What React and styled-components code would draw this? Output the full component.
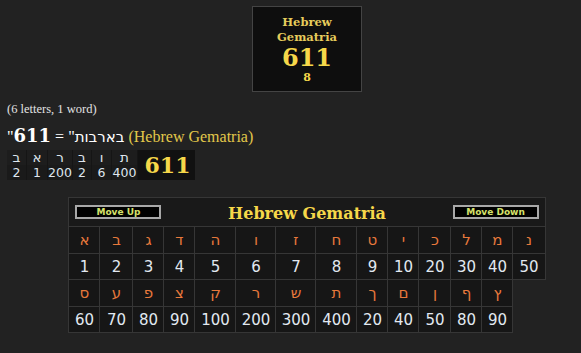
import styled, { createGlobalStyle } from 'styled-components';

const GlobalStyle = createGlobalStyle`
  html, body {
    margin: 0;
    padding: 0;
    background: #222222;
    overflow: hidden;
  }
  body {
    font-family: "Liberation Serif", serif;
    color: #dddddd;
  }
`;

const Page = styled.div`
  padding: 6px 0 0 7px;
`;

const Centered = styled.div`
  display: flex;
  flex-direction: column;
  align-items: center;
  padding-left: 26px;
`;

const ResultBox = styled.div`
  width: 110px;
  height: 86px;
  box-sizing: border-box;
  border: 1px solid #444;
  background: #0e0e0e;
  display: flex;
  flex-direction: column;
  align-items: center;
  padding-top: 8px;
  font-family: "DejaVu Serif", serif;
  font-weight: bold;
`;

const BoxTitle = styled.div`
  font-size: 11.5px;
  line-height: 15px;
  color: #e6cc5c;
  text-align: center;
`;

const BoxTotal = styled.div`
  font-size: 24px;
  line-height: 26px;
  color: #f6d84a;
`;

const BoxSmall = styled.div`
  font-size: 11px;
  line-height: 13px;
  color: #f6d84a;
`;

const Summary = styled.div`
  margin-top: 10px;
  font-size: 12.5px;
  line-height: 15px;
  color: #e2e2e2;
`;

const Equation = styled.div`
  margin-top: 9px;
  font-size: 16px;
  line-height: 20px;
  color: #ffffff;
`;

const Total = styled.b`
  font-family: "DejaVu Serif", serif;
  font-size: 18px;
`;

const Hebrew = styled.span`
  font-family: "DejaVu Sans", sans-serif;
  font-size: 15px;
`;

const Cipher = styled.span`
  font-family: "Liberation Serif", serif;
  font-size: 16px;
  color: #e2c84a;
`;

const Breakdown = styled.table`
  margin-top: 3px;
  border-collapse: separate;
  border-spacing: 0;
  background: #161616;
`;

const BCell = styled.td`
  padding: 0;
  height: 15px;
  line-height: 15px;
  text-align: center;
  font-family: "DejaVu Sans", sans-serif;
  font-size: ${({ top }) => (top ? '13.5px' : '12.5px')};
  color: #dfe6ee;
  background: ${({ top }) => (top ? '#1d1d1d' : '#1a1a1a')};
  border-right: 1px solid #151515;
`;

const BTotal = styled.td`
  width: 55px;
  padding: 0 0 0 2px;
  text-align: center;
  background: #111111;
  font-family: "DejaVu Serif", serif;
  font-weight: bold;
  font-size: 22px;
  color: #f6d84a;
  vertical-align: middle;
`;

const Chart = styled.table`
  margin-top: 17px;
  width: 477px;
  table-layout: fixed;
  border-collapse: collapse;
`;

const HeaderCell = styled.td`
  border: 1px solid #363636;
  background: #191919;
  height: 28px;
  padding: 0 6px;
`;

const HeaderBar = styled.div`
  display: flex;
  align-items: center;
  justify-content: space-between;
`;

const MoveButton = styled.button`
  width: 86px;
  height: 14px;
  padding: 0;
  background: #000;
  border: 2px solid #a8a8a8;
  color: #d6e26a;
  font-family: "DejaVu Sans", sans-serif;
  font-weight: bold;
  font-size: 9px;
  line-height: 10px;
`;

const ChartTitle = styled.div`
  font-family: "DejaVu Serif", serif;
  font-weight: bold;
  font-size: 16px;
  color: #f6d84a;
  margin-top: 3px;
`;

const Cell = styled.td`
  border: 1px solid #363636;
  background: #161616;
  text-align: center;
  padding: 0;
  height: ${({ letter }) => (letter ? '26px' : '25px')};
  font-family: "DejaVu Sans", sans-serif;
  font-size: 15px;
  color: ${({ letter }) => (letter ? '#e8793c' : '#e2e9f1')};
`;

const widths = [31, 33, 31, 31, 41, 40, 40, 41, 31, 31, 32, 31, 31, 32];
const wordWidths = [20, 21, 25, 19, 20, 26];

const rowOne = [
  ['א', 1], ['ב', 2], ['ג', 3], ['ד', 4], ['ה', 5], ['ו', 6], ['ז', 7],
  ['ח', 8], ['ט', 9], ['י', 10], ['כ', 20], ['ל', 30], ['מ', 40], ['נ', 50],
];

const rowTwo = [
  ['ס', 60], ['ע', 70], ['פ', 80], ['צ', 90], ['ק', 100], ['ר', 200], ['ש', 300],
  ['ת', 400], ['ך', 20], ['ם', 40], ['ן', 50], ['ף', 80], ['ץ', 90],
];

const word = [['ב', 2], ['א', 1], ['ר', 200], ['ב', 2], ['ו', 6], ['ת', 400]];

function LetterRows({ items }) {
  return (
    <>
      <tr>
        {items.map(([l], i) => (
          <Cell letter key={i}>{l}</Cell>
        ))}
      </tr>
      <tr>
        {items.map(([, n], i) => (
          <Cell key={i}>{n}</Cell>
        ))}
      </tr>
    </>
  );
}

export default function App() {
  return (
    <Page>
      <GlobalStyle />
      <Centered>
        <ResultBox>
          <BoxTitle>Hebrew<br />Gematria</BoxTitle>
          <BoxTotal>611</BoxTotal>
          <BoxSmall>8</BoxSmall>
        </ResultBox>
      </Centered>

      <Summary>(6 letters, 1 word)</Summary>
      <Equation>
        "<Hebrew>בארבות</Hebrew>" = <Total>611</Total> <Cipher>(Hebrew Gematria)</Cipher>
      </Equation>

      <Breakdown>
        <colgroup>
          {wordWidths.map((w, i) => (
            <col key={i} style={{ width: w }} />
          ))}
          <col />
        </colgroup>
        <tbody>
          <tr>
            {word.map(([l], i) => (
              <BCell top key={i}>{l}</BCell>
            ))}
            <BTotal rowSpan={2}>611</BTotal>
          </tr>
          <tr>
            {word.map(([, n], i) => (
              <BCell key={i}>{n}</BCell>
            ))}
          </tr>
        </tbody>
      </Breakdown>

      <Centered>
        <Chart>
          <colgroup>
            {widths.map((w, i) => (
              <col key={i} style={{ width: w }} />
            ))}
          </colgroup>
          <tbody>
            <tr>
              <HeaderCell colSpan={14}>
                <HeaderBar>
                  <MoveButton>Move Up</MoveButton>
                  <ChartTitle>Hebrew Gematria</ChartTitle>
                  <MoveButton>Move Down</MoveButton>
                </HeaderBar>
              </HeaderCell>
            </tr>
            <LetterRows items={rowOne} />
            <LetterRows items={rowTwo} />
          </tbody>
        </Chart>
      </Centered>
    </Page>
  );
}
